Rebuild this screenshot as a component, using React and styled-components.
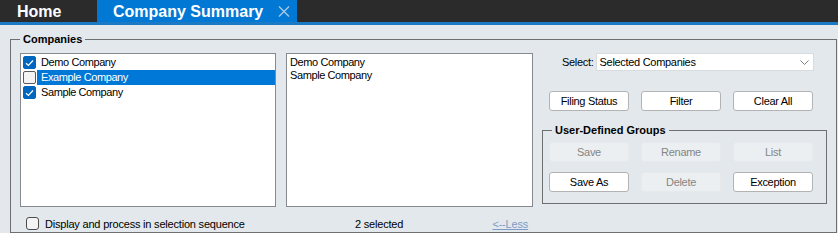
import React from "react";
import styled, { createGlobalStyle } from "styled-components";

const Global = createGlobalStyle`
  html, body { margin: 0; padding: 0; background: #e2e8eb; }
  body { font-family: "Liberation Sans", Arial, sans-serif; font-size: 11px; color: #000; }
  * { box-sizing: border-box; }
`;

const Page = styled.div`
  width: 838px;
  height: 233px;
  overflow: hidden;
  display: flex;
  flex-direction: column;
  background: #e2e8eb;
`;

const TabBar = styled.div`
  display: flex;
  height: 25px;
  background: #2b2b2b;
  border-bottom: 3px solid #1b7ac6;
`;

const Tab = styled.div`
  display: flex;
  align-items: flex-start;
  width: ${(p) => p.$w}px;
  height: 22px;
  padding-left: ${(p) => p.$pl}px;
  background: ${(p) => (p.$active ? "#0078d4" : "#2b2b2b")};
  color: #fff;
  font-family: "Liberation Sans", Arial, sans-serif;
  font-weight: bold;
  font-size: 16px;
  line-height: 24px;
  overflow: hidden;
`;

const TabLabel = styled.span`
  flex: 1;
  white-space: nowrap;
`;

const CloseBox = styled.span`
  display: flex;
  width: 12px;
  height: 22px;
  align-items: center;
  margin-right: 7px;
`;

const Content = styled.div`
  flex: 1;
  padding: 7px 1px 0 10px;
  display: flex;
`;

const Group = styled.fieldset`
  margin: 0;
  border: 1px solid #6f6f6f;
  padding: 7px 0 1px 9px;
  flex: 1;
  min-width: 0;
  display: flex;
  flex-direction: column;
`;

const Legend = styled.legend`
  padding: 0 3px;
  margin-left: ${(p) => p.$ml || 0}px;
  font-weight: bold;
  font-size: 11px;
  line-height: 14px;
  color: #000;
`;

const MainRow = styled.div`
  display: flex;
  height: 154px;
`;

const ListBox = styled.div`
  width: ${(p) => p.$w}px;
  height: 154px;
  margin-right: ${(p) => p.$mr || 0}px;
  background: #fff;
  border: 1px solid #868a90;
  padding: ${(p) => p.$pt || 1}px 0 0 ${(p) => p.$pl}px;
  letter-spacing: -0.4px;
`;

const CheckRow = styled.div`
  display: flex;
  align-items: center;
  height: 15px;
`;

const Box = styled.span`
  width: 13px;
  height: 13px;
  flex: none;
  border-radius: 2px;
  display: flex;
  align-items: center;
  justify-content: center;
  background: ${(p) => (p.$checked ? "#0067c0" : "#f4f4f4")};
  border: 1px solid ${(p) => (p.$checked ? "#0067c0" : "#5a5a5a")};
`;

const CheckLabel = styled.span`
  flex: 1;
  height: 15px;
  line-height: 15px;
  margin-left: 1px;
  padding-left: 4px;
  background: ${(p) => (p.$selected ? "#0078d7" : "transparent")};
  color: ${(p) => (p.$selected ? "#fff" : "#000")};
  white-space: nowrap;
`;

const PlainItem = styled.div`
  height: 13px;
  line-height: 13px;
  white-space: nowrap;
`;

const RightPanel = styled.div`
  flex: 1;
  display: flex;
  flex-direction: column;
`;

const SelectRow = styled.div`
  display: flex;
  align-items: center;
  height: 18px;
  padding-left: 29px;
  letter-spacing: -0.3px;
`;

const SelectLabel = styled.span`
  margin-right: 2px;
  white-space: nowrap;
`;

const Dropdown = styled.div`
  width: 218px;
  height: 18px;
  background: #fff;
  border: 1px solid #d8dcdf;
  display: flex;
  align-items: center;
  justify-content: space-between;
  padding: 0 4px 0 3px;
`;

const ButtonRow = styled.div`
  display: flex;
  gap: ${(p) => p.$gap || 12}px;
  margin-top: ${(p) => p.$mt || 0}px;
  padding-left: ${(p) => p.$pl || 0}px;
`;

const Button = styled.div`
  width: 80px;
  height: 20px;
  display: flex;
  align-items: center;
  justify-content: center;
  border-radius: 3px;
  letter-spacing: -0.3px;
  white-space: nowrap;
  background: ${(p) => (p.$disabled ? "#eceff1" : "#fff")};
  border: 1px solid ${(p) => (p.$disabled ? "#e6eaec" : "#b3b3b3")};
  color: ${(p) => (p.$disabled ? "#858585" : "#000")};
`;

const SubGroup = styled.fieldset`
  margin: 12px 0 0 9px;
  width: 285px;
  border: 1px solid #6f6f6f;
  padding: 5px 0 11px 6px;
  display: flex;
  flex-direction: column;
  gap: 10px;
`;

const BottomRow = styled.div`
  display: flex;
  align-items: center;
  height: 24px;
  padding-top: 9px;
  letter-spacing: -0.2px;
`;

const BottomLeft = styled.div`
  width: 266px;
  display: flex;
  align-items: center;
  padding-left: 6px;
`;

const RoundBox = styled.span`
  width: 13px;
  height: 13px;
  flex: none;
  border: 1px solid #4d4d4d;
  border-radius: 3px;
  background: #f4f4f4;
  margin-right: 6px;
`;

const BottomMid = styled.div`
  width: 247px;
  display: flex;
  align-items: center;
  padding: 0 5px 0 69px;
`;

const Count = styled.span`
  flex: 1;
`;

const LessLink = styled.span`
  color: #7d9bc6;
  text-decoration: underline;
`;

const Check = () => (
  <svg width="9" height="8" viewBox="0 0 9 8">
    <path d="M1 4.2 L3.4 6.5 L8 1.5" fill="none" stroke="#fff" strokeWidth="1.2" />
  </svg>
);

const companies = [
  { name: "Demo Company", checked: true },
  { name: "Example Company", checked: false, selected: true },
  { name: "Sample Company", checked: true },
];

export default function App() {
  return (
    <>
      <Global />
      <Page>
        <TabBar>
          <Tab $w={97} $pl={17}>
            <TabLabel>Home</TabLabel>
          </Tab>
          <Tab $w={200} $pl={16} $active>
            <TabLabel>Company Summary</TabLabel>
            <CloseBox>
              <svg width="12" height="11" viewBox="0 0 12 11">
                <path d="M1 0.5 L11 10.5 M11 0.5 L1 10.5" stroke="#a9c9e8" strokeWidth="1.4" fill="none" />
              </svg>
            </CloseBox>
          </Tab>
        </TabBar>
        <Content>
          <Group>
            <Legend>Companies</Legend>
            <MainRow>
              <ListBox $w={256} $mr={10} $pl={2}>
                {companies.map((c) => (
                  <CheckRow key={c.name}>
                    <Box $checked={c.checked}>{c.checked && <Check />}</Box>
                    <CheckLabel $selected={c.selected}>{c.name}</CheckLabel>
                  </CheckRow>
                ))}
              </ListBox>
              <ListBox $w={247} $pl={3} $pt={2}>
                <PlainItem>Demo Company</PlainItem>
                <PlainItem>Sample Company</PlainItem>
              </ListBox>
              <RightPanel>
                <SelectRow>
                  <SelectLabel>Select:</SelectLabel>
                  <Dropdown>
                    <span>Selected Companies</span>
                    <svg width="9" height="5" viewBox="0 0 9 5">
                      <path d="M0.5 0.5 L4.5 4.5 L8.5 0.5" fill="none" stroke="#707070" strokeWidth="0.9" />
                    </svg>
                  </Dropdown>
                </SelectRow>
                <ButtonRow $mt={20} $pl={16}>
                  <Button>Filing Status</Button>
                  <Button>Filter</Button>
                  <Button>Clear All</Button>
                </ButtonRow>
                <SubGroup>
                  <Legend $ml={3}>User-Defined Groups</Legend>
                  <ButtonRow>
                    <Button $disabled>Save</Button>
                    <Button $disabled>Rename</Button>
                    <Button $disabled>List</Button>
                  </ButtonRow>
                  <ButtonRow>
                    <Button>Save As</Button>
                    <Button $disabled>Delete</Button>
                    <Button>Exception</Button>
                  </ButtonRow>
                </SubGroup>
              </RightPanel>
            </MainRow>
            <BottomRow>
              <BottomLeft>
                <RoundBox />
                <span>Display and process in selection sequence</span>
              </BottomLeft>
              <BottomMid>
                <Count>2 selected</Count>
                <LessLink>&lt;--Less</LessLink>
              </BottomMid>
            </BottomRow>
          </Group>
        </Content>
      </Page>
    </>
  );
}
